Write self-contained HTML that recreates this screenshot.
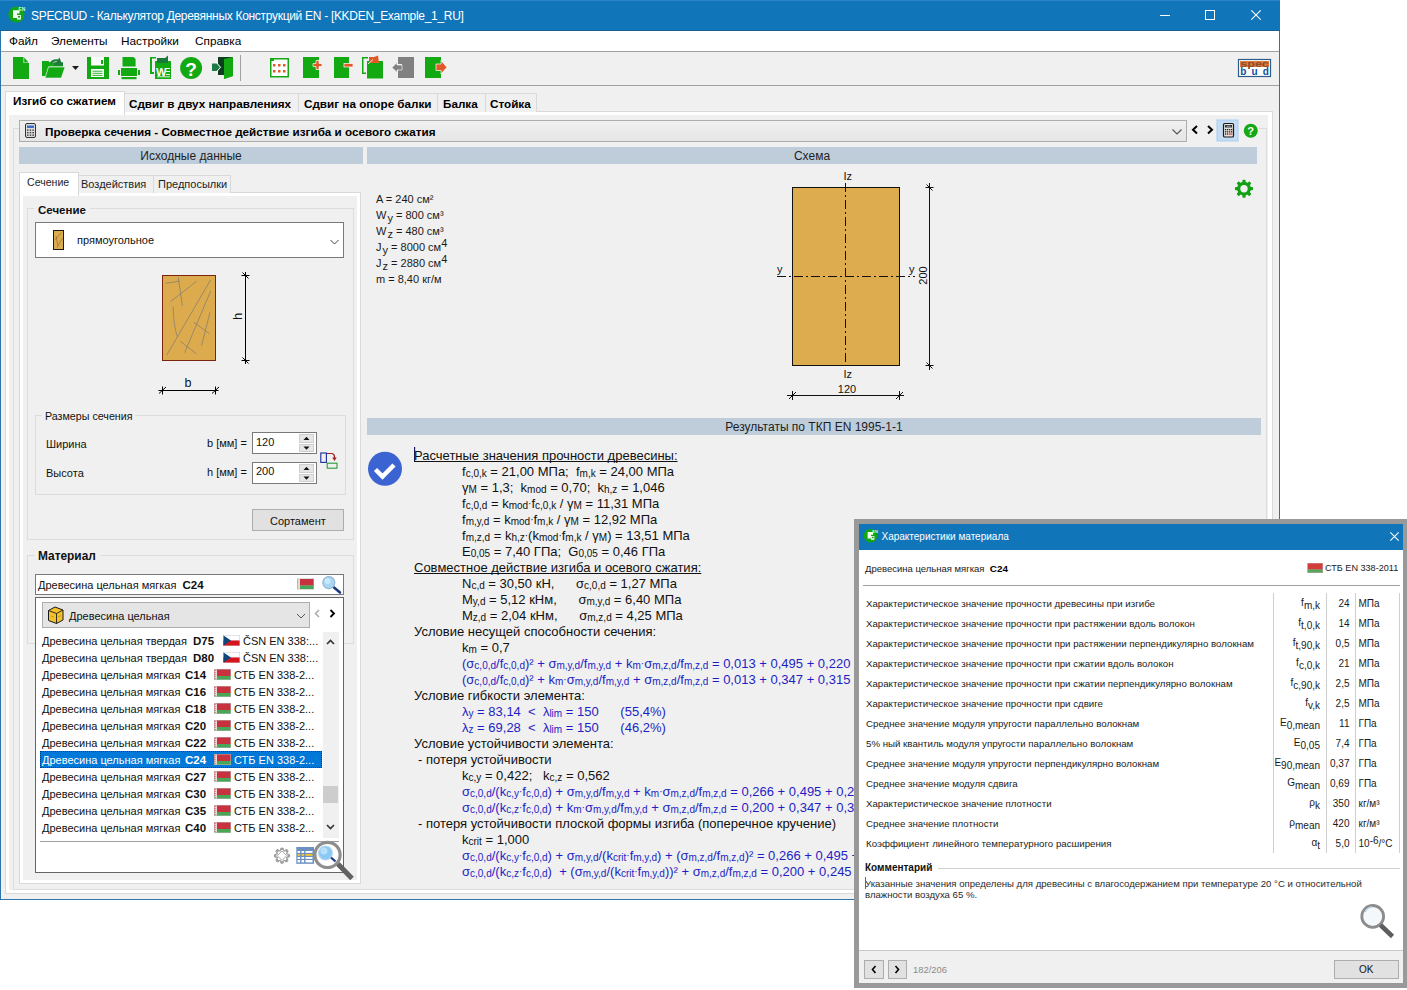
<!DOCTYPE html>
<html><head><meta charset="utf-8">
<style>
*{box-sizing:border-box;margin:0;padding:0}
html,body{width:1407px;height:990px;overflow:hidden;background:#fff;font-family:"Liberation Sans",sans-serif;font-size:11px;color:#000}
.a{position:absolute}
.t{position:absolute;white-space:nowrap;line-height:1}
.hdr{position:absolute;background:#bfcddb;height:17px;color:#1e1e1e;font-size:12px;text-align:center;line-height:19px}
.b{font-weight:bold}
svg{position:absolute;overflow:visible}
.r sub{font-size:10px;vertical-align:-1px;line-height:0}
.r sup{font-size:9px;vertical-align:4px;line-height:0}
.bl{color:#1a1ab4}
.dt{font-size:10px;position:relative;top:-1.5px}
.ul{text-decoration:underline;text-decoration-skip-ink:none}
.row{position:absolute;left:0;height:17px;width:282px;line-height:17px;white-space:nowrap}
.dr{position:absolute;left:0;width:540px;height:20px;line-height:20px;white-space:nowrap;font-size:9.65px;color:#1a1a1a}
.dr sub{font-size:9px;vertical-align:-2px;line-height:0}
</style></head><body>
<!-- ===== main window ===== -->
<div class="a" style="left:0;top:0;width:1280px;height:900px;background:#f0f0f0;border:1px solid #2c74ad;border-top:none"></div>
<div class="a" style="left:0;top:0;width:1280px;height:31px;background:#1175ba;border-bottom:1px solid #1a5f90;border-top:1px solid #2a86c8"></div>
<svg style="left:4px;top:2px" width="26" height="26" viewBox="0 0 26 26"><circle cx="12.4" cy="12.6" r="8" fill="#12a612"/><path d="M9 8.2 H15.5 V11.5 H13 V16 H9 Z" fill="#f4fff4"/><rect x="13" y="13" width="4" height="4.6" fill="#d8f8d8"/><rect x="14" y="14" width="2" height="1.5" fill="#3a8a3a"/><text x="14.5" y="9.2" font-size="4.8" font-weight="bold" fill="#c8ffc8" font-family="Liberation Sans">EN</text></svg>
<div class="t" style="left:31px;top:10px;font-size:12px;letter-spacing:-0.3px;color:#fff">SPECBUD - Калькулятор Деревянных Конструкций EN - [KKDEN_Example_1_RU]</div>
<!-- window buttons -->
<div class="a" style="left:1160px;top:15px;width:10px;height:1px;background:#fff"></div>
<div class="a" style="left:1205px;top:10px;width:10px;height:10px;border:1px solid #fff"></div>
<svg style="left:1251px;top:10px" width="10" height="10" viewBox="0 0 10 10"><path d="M0.3 0.3 L9.7 9.7 M9.7 0.3 L0.3 9.7" stroke="#fff" stroke-width="1.1"/></svg>
<!-- menu -->
<div class="a" style="left:1px;top:31px;width:1278px;height:20px;background:#fff"></div>
<div class="a" style="left:1px;top:51px;width:1278px;height:1px;background:#a0a0a0"></div>
<div class="t" style="left:9px;top:36px;font-size:11.8px">Файл</div>
<div class="t" style="left:51px;top:36px;font-size:11.8px">Элементы</div>
<div class="t" style="left:121px;top:36px;font-size:11.8px">Настройки</div>
<div class="t" style="left:195px;top:36px;font-size:11.8px">Справка</div>
<!-- toolbar -->
<div class="a" style="left:1px;top:85px;width:1278px;height:1px;background:#a0a0a0"></div>
<svg style="left:0;top:0" width="1407" height="990" viewBox="0 0 1407 990">
<g fill="#12a912">
 <!-- new -->
 <path d="M13 57 H23.5 V63 H29 V79 H13 Z"/>
 <path d="M24.2 57.6 L28.6 62.4 H24.2 Z"/>
 <!-- open -->
 <path d="M42 61 H48.5 L50 62.5 H63 V66.5 H48.5 L45.5 76 H42 Z"/>
 <path d="M50 62.5 Q53 58.5 58 59.5 L59.5 57.5 L61.5 63 L56 63 L57 61.3 Q54 61 51.5 63.5 Z" fill="#1a7a3a"/>
 <rect x="54" y="62.5" width="9" height="3" fill="#1a7a3a"/>
 <path d="M48.5 67 H65 L61.3 78 H45 Z" stroke="#f0f0f0" stroke-width="0.6"/>
 <!-- save -->
 <path d="M87 57 H109 V79 H87 Z"/>
</g>
<path d="M72 66 H79 L75.5 70 Z" fill="#1e1e1e"/>
<rect x="91" y="57" width="13" height="8.5" fill="#fff"/>
<rect x="101" y="60" width="2" height="4" fill="#12a912"/>
<rect x="91" y="69" width="13" height="8" fill="#fff"/>
<path d="M92.5 71.2 H102.5 M92.5 73.3 H102.5 M92.5 75.4 H102.5" stroke="#12a912" stroke-width="0.9"/>
<g fill="#12a912">
 <!-- print -->
 <path d="M122.5 57 H133.5 L135.6 59 V66.5 H122.5 Z"/>
 <rect x="121" y="68" width="16" height="8"/>
 <rect x="118" y="70" width="2" height="5"/>
 <rect x="138" y="70" width="2" height="5"/>
 <rect x="121.5" y="77" width="15" height="2.2"/>
 <!-- word -->
 <path d="M150 57 H156 V58.5 H152 V72 H154 V74 H150 Z"/>
 <rect x="155" y="61" width="16" height="18"/>
 <!-- help -->
 <circle cx="191.1" cy="68" r="11"/>
 <!-- exit door -->
 <path d="M224 59 L233 57 V76 L224 79 Z"/>
</g>
<path d="M157 58 H165 L168 55.5 V63 H157 Z" fill="#1a7a3a"/>
<text x="156" y="76.3" font-family="Liberation Sans" font-weight="bold" font-size="11" fill="#fff" textLength="10.5" lengthAdjust="spacingAndGlyphs">W</text>
<path d="M166 68.5 H170 M166 71.5 H170 M166 74.5 H170 M157 76.8 H170" stroke="#fff" stroke-width="0.9"/>
<text x="191.1" y="75.5" font-family="Liberation Sans" font-weight="bold" font-size="19" fill="#fff" text-anchor="middle">?</text>
<path d="M218 57 H233 V75 H218 Z" fill="#0d3d1f"/>
<path d="M224 59 L233 57 V76 L224 79 Z" fill="#12a912"/>
<path d="M212 63.5 H217 L221.5 67.3 L217 71 H212 Z" fill="#1d7a46"/>
<path d="M216 62 L220.5 67.3 L216 72.5" stroke="#fff" stroke-width="1" fill="none"/>
<!-- separator -->
<rect x="240" y="55" width="1" height="26" fill="#a0a0a0"/>
<!-- grid -->
<rect x="270" y="58" width="19" height="19.5" fill="#12a912"/>
<path d="M271.5 61 H274 V59.5 H287.5 V76 H271.5 Z" fill="#fff"/>
<g fill="#e05a28"><rect x="273" y="64" width="2.5" height="2.5"/><rect x="278" y="64" width="2.5" height="2.5"/><rect x="283" y="64" width="2.5" height="2.5"/><rect x="273" y="70" width="2.5" height="2.5"/><rect x="278" y="70" width="2.5" height="2.5"/><rect x="283" y="70" width="2.5" height="2.5"/></g>
<!-- add -->
<rect x="303" y="57" width="16" height="21" fill="#12a912"/>
<path d="M313 63.5 H316 V60.5 H319 V63.5 H322 V66.5 H319 V69.5 H316 V66.5 H313 Z" fill="#e05a28" stroke="#fff" stroke-width="0.7"/>
<!-- remove -->
<rect x="334" y="57" width="15" height="21" fill="#12a912"/>
<rect x="344" y="63.5" width="9" height="3.5" fill="#e05a28" stroke="#fff" stroke-width="0.7"/>
<!-- copy -->
<path d="M362 57 H368 V58.5 H363.5 V72.5 H366 V74 H362 Z" fill="#12a912"/>
<rect x="367" y="61" width="16" height="17.5" fill="#12a912"/>
<path d="M369 57 H374 L378 55.5 L379 63 H369 Z" fill="#e05a28"/>
<path d="M368 64 L373 59.5" stroke="#fff" stroke-width="0.8"/>
<!-- gray -->
<path d="M398 57 H414 V78 H398 V70 H402 V64 H398 Z" fill="#808080"/>
<path d="M392 67.5 L397 62.5 V65 H402 V70 H397 V72.5 Z" fill="#808080" stroke="#fff" stroke-width="0.6"/>
<!-- export -->
<rect x="425" y="57" width="16" height="21" fill="#12a912"/>
<path d="M436 64 H441 V60.5 L447 67.3 L441 74 V70.5 H436 Z" fill="#e05a28" stroke="#fff" stroke-width="0.7"/>
<!-- logo -->
<rect x="1238.5" y="59.5" width="32" height="17" fill="#fff" stroke="#2e5b8e" stroke-width="1.2"/>
<rect x="1240" y="61" width="29" height="6" fill="#e07a3a"/>
<text x="1240.3" y="67.2" font-family="Liberation Sans" font-weight="bold" font-size="9" fill="#8a4a2a" textLength="28.5" lengthAdjust="spacingAndGlyphs">spec</text>
<text x="1240.3" y="74.8" font-family="Liberation Sans" font-weight="bold" font-size="10" fill="#0b4e9e" textLength="28.5" lengthAdjust="spacing">bud</text>
</svg>
<!-- ===== main tabs ===== -->
<div class="a" style="left:5px;top:111px;width:1268px;height:783px;border:1px solid #d9d9d9;background:#fff"></div>
<div class="a" style="left:9px;top:115px;width:1259px;height:775px;background:#f0f0f0"></div>
<!-- inactive tabs -->
<div class="a" style="left:124px;top:93px;width:175px;height:19px;background:#f0f0f0;border:1px solid #d9d9d9;border-bottom:none"></div>
<div class="a" style="left:298px;top:93px;width:140px;height:19px;background:#f0f0f0;border:1px solid #d9d9d9;border-bottom:none"></div>
<div class="a" style="left:437px;top:93px;width:49px;height:19px;background:#f0f0f0;border:1px solid #d9d9d9;border-bottom:none"></div>
<div class="a" style="left:485px;top:93px;width:52px;height:19px;background:#f0f0f0;border:1px solid #d9d9d9;border-bottom:none"></div>
<div class="a" style="left:5px;top:91px;width:120px;height:24px;background:#fff;border:1px solid #d9d9d9;border-bottom:none"></div>
<div class="t b" style="left:13px;top:95px;font-size:11.7px">Изгиб со сжатием</div>
<div class="t b" style="left:129px;top:98px;font-size:11.7px">Сдвиг в двух направлениях</div>
<div class="t b" style="left:304px;top:98px;font-size:11.7px">Сдвиг на опоре балки</div>
<div class="t b" style="left:443px;top:98px;font-size:11.7px">Балка</div>
<div class="t b" style="left:490px;top:98px;font-size:11.7px">Стойка</div>
<!-- group frame -->
<div class="a" style="left:13px;top:128px;width:1254px;height:762px;border:1px solid #dcdcdc;border-top:none"></div>
<div class="a" style="left:13px;top:128px;width:6px;height:1px;background:#dcdcdc"></div>
<div class="a" style="left:1259px;top:128px;width:8px;height:1px;background:#dcdcdc"></div>
<!-- header combo -->
<div class="a" style="left:19px;top:120px;width:1168px;height:22px;border:1px solid #adadad;background:linear-gradient(#f0f0f0,#e5e5e5)"></div>
<svg style="left:0;top:0" width="1407" height="990" viewBox="0 0 1407 990">
 <rect x="25.5" y="123.5" width="10" height="14" rx="1.5" fill="#ddd" stroke="#333" stroke-width="1"/>
 <rect x="27" y="125.5" width="7" height="2.5" fill="#3a6fd0"/>
 <g fill="#333"><rect x="27" y="129.5" width="1.5" height="1.3"/><rect x="29.7" y="129.5" width="1.5" height="1.3"/><rect x="32.4" y="129.5" width="1.5" height="1.3"/><rect x="27" y="132" width="1.5" height="1.3"/><rect x="29.7" y="132" width="1.5" height="1.3"/><rect x="32.4" y="132" width="1.5" height="1.3"/><rect x="27" y="134.5" width="1.5" height="1.3"/><rect x="29.7" y="134.5" width="1.5" height="1.3"/><rect x="32.4" y="134.5" width="1.5" height="1.3"/></g>
 <path d="M1172.5 129.5 L1177 134 L1181.5 129.5" stroke="#555" stroke-width="1.1" fill="none"/>
 <path d="M1197 126 L1193 129.7 L1197 133.4" stroke="#000" stroke-width="2" fill="none"/>
 <path d="M1208 126 L1212 129.7 L1208 133.4" stroke="#000" stroke-width="2" fill="none"/>
 <rect x="1217" y="120" width="21" height="21" fill="#c4ddf5" stroke="#a9cdef" stroke-width="1"/>
 <rect x="1223.5" y="123.5" width="10" height="13.5" rx="1.3" fill="#e6e0da" stroke="#1a1a1a" stroke-width="1.2"/>
 <rect x="1225" y="125" width="7" height="2.5" fill="#333"/>
 <rect x="1226.5" y="125.7" width="4" height="1" fill="#8ac"/>
 <g fill="#222"><rect x="1225" y="129" width="1.3" height="1.3"/><rect x="1227" y="129" width="1.3" height="1.3"/><rect x="1229" y="129" width="1.3" height="1.3"/><rect x="1231" y="129" width="1.3" height="1.3"/><rect x="1225" y="131.2" width="1.3" height="1.3"/><rect x="1227" y="131.2" width="1.3" height="1.3"/><rect x="1229" y="131.2" width="1.3" height="1.3"/><rect x="1231" y="131.2" width="1.3" height="1.3"/><rect x="1225" y="133.4" width="1.3" height="1.3"/><rect x="1227" y="133.4" width="1.3" height="1.3"/></g>
 <rect x="1229" y="133.4" width="3.3" height="1.3" fill="#e04040"/>
 <circle cx="1250.8" cy="130.8" r="7" fill="#12a912"/>
 <text x="1247.3" y="135.3" font-family="Liberation Sans" font-weight="bold" font-size="11" fill="#fff">?</text>
</svg>
<div class="t b" style="left:45px;top:126px;font-size:11.7px">Проверка сечения - Совместное действие изгиба и осевого сжатия</div>
<!-- section headers -->
<div class="hdr" style="left:19px;top:147px;width:344px">Исходные данные</div>
<div class="hdr" style="left:367px;top:147px;width:890px">Схема</div>
<!-- ===== left panel ===== -->
<div class="a" style="left:19px;top:192px;width:342px;height:692px;border:1px solid #d9d9d9;background:#fff"></div>
<div class="a" style="left:23px;top:196px;width:334px;height:684px;background:#f0f0f0"></div>
<div class="a" style="left:78px;top:175px;width:76px;height:18px;background:#f0f0f0;border:1px solid #d9d9d9;border-bottom:none"></div>
<div class="a" style="left:153px;top:175px;width:78px;height:18px;background:#f0f0f0;border:1px solid #d9d9d9;border-bottom:none"></div>
<div class="a" style="left:19px;top:172px;width:60px;height:24px;background:#fff;border:1px solid #d9d9d9;border-bottom:none"></div>
<div class="t" style="left:27px;top:177px;font-size:10.6px;color:#1e1e1e">Сечение</div>
<div class="t" style="left:81px;top:179px;font-size:11px;color:#1e1e1e">Воздействия</div>
<div class="t" style="left:158px;top:179px;font-size:11px;color:#1e1e1e">Предпосылки</div>
<!-- group Сечение -->
<div class="a" style="left:27px;top:208px;width:327px;height:332px;border:1px solid #dcdcdc"></div>
<div class="a" style="left:34px;top:202px;width:56px;height:12px;background:#f0f0f0"></div>
<div class="t b" style="left:38px;top:205px;font-size:11.5px;color:#111">Сечение</div>
<div class="a" style="left:35px;top:222px;width:309px;height:36px;background:#fff;border:1px solid #7a7a7a"></div>
<div class="t" style="left:77px;top:235px;font-size:11px;color:#111">прямоугольное</div>
<svg style="left:0;top:0" width="1407" height="990" viewBox="0 0 1407 990">
 <rect x="53.5" y="230.5" width="10" height="19" fill="#dcab4e" stroke="#1a1a1a" stroke-width="1"/>
 <path d="M55 240 L61.5 232.5 M56 236 L58 246 M57 247.5 L62.5 238" stroke="#8a6a30" stroke-width="0.6" fill="none"/>
 <path d="M330.5 240 L334.5 244 L338.5 240" stroke="#444" stroke-width="1" fill="none"/>
 <!-- section pic -->
 <rect x="162.5" y="275.5" width="53" height="85" fill="#dcab4e" stroke="#7a2410" stroke-width="1"/>
 <g stroke="#7f7a70" stroke-width="0.7" fill="none">
  <path d="M165.2 283.3 L179.6 281.2"/><path d="M178.2 277 L182.4 306"/><path d="M170.4 301.7 L196.6 281.2"/>
  <path d="M166.9 354.8 L210.7 279.8"/><path d="M173.2 306.7 Q173.3 325 177.5 337"/><path d="M184.6 352.6 L210.7 291"/>
  <path d="M180.3 341.3 L196.6 354"/><path d="M193.7 322.2 L209.3 333.5"/><path d="M201.5 345.6 L210 312.3"/>
 </g>
 <g stroke="#000" stroke-width="1" fill="none">
  <path d="M245.5 272 V364"/><path d="M241.5 275.5 H249.5 M242.5 272.5 L248.5 278.5"/><path d="M241.5 360.5 H249.5 M242.5 357.5 L248.5 363.5"/>
  <path d="M158.5 390.5 H218.5"/><path d="M162.5 386.5 V394.5 M159 393.5 L166 387"/><path d="M215.5 386.5 V394.5 M212 393.5 L219 387"/>
 </g>
 <text x="0" y="0" transform="translate(242,316.5) rotate(-90)" font-family="Liberation Sans" font-size="13" fill="#111" text-anchor="middle">h</text>
 <text x="188" y="386.6" font-family="Liberation Sans" font-size="12.5" fill="#111" text-anchor="middle">b</text>
</svg>
<!-- group Размеры сечения -->
<div class="a" style="left:35px;top:415px;width:311px;height:80px;border:1px solid #dcdcdc"></div>
<div class="a" style="left:42px;top:409px;width:93px;height:12px;background:#f0f0f0"></div>
<div class="t" style="left:45px;top:411px;font-size:10.7px;color:#111">Размеры сечения</div>
<div class="t" style="left:46px;top:439px;font-size:11px;color:#111">Ширина</div>
<div class="t" style="left:46px;top:468px;font-size:11px;color:#111">Высота</div>
<div class="t" style="left:207px;top:438px;font-size:11px;color:#111">b [мм] =</div>
<div class="t" style="left:207px;top:467px;font-size:11px;color:#111">h [мм] =</div>
<div class="a" style="left:252px;top:432px;width:65px;height:22px;background:#fff;border:1px solid #7a7a7a"></div>
<div class="a" style="left:252px;top:462px;width:65px;height:22px;background:#fff;border:1px solid #7a7a7a"></div>
<div class="t" style="left:256px;top:437px;font-size:11px;color:#111">120</div>
<div class="t" style="left:256px;top:466px;font-size:11px;color:#111">200</div>
<svg style="left:0;top:0" width="1407" height="990" viewBox="0 0 1407 990">
 <g fill="#e6e6e6" stroke="#cfcfcf" stroke-width="1">
  <rect x="299.5" y="434.5" width="14" height="8"/><rect x="299.5" y="444.5" width="14" height="7"/>
  <rect x="299.5" y="464.5" width="14" height="8"/><rect x="299.5" y="474.5" width="14" height="7"/>
 </g>
 <g fill="#111"><path d="M303.5 440 H309.5 L306.5 436.8 Z"/><path d="M303.5 446.5 H309.5 L306.5 449.7 Z"/>
 <path d="M303.5 470 H309.5 L306.5 466.8 Z"/><path d="M303.5 476.5 H309.5 L306.5 479.7 Z"/></g>
 <rect x="320.8" y="453" width="5.6" height="9.4" fill="none" stroke="#1a2a9a" stroke-width="1.1"/>
 <rect x="327.2" y="463.2" width="9.8" height="5" fill="none" stroke="#2a9a3a" stroke-width="1.1"/>
 <path d="M327 453.5 H332 Q334.5 454 334.5 457 V459" stroke="#a02020" stroke-width="1.2" fill="none"/>
 <path d="M332.3 457.5 L334.5 461 L336.7 457.5 Z" fill="#a02020"/>
</svg>
<!-- Сортамент -->
<div class="a" style="left:252px;top:509px;width:92px;height:22px;background:#e1e1e1;border:1px solid #adadad"></div>
<div class="t" style="left:270px;top:516px;font-size:11px;color:#111">Сортамент</div>
<!-- group Материал -->
<div class="a" style="left:27px;top:555px;width:327px;height:89px;border:1px solid #dcdcdc"></div>
<div class="a" style="left:34px;top:549px;width:66px;height:12px;background:#f0f0f0"></div>
<div class="t b" style="left:38px;top:551px;font-size:11.9px;color:#111">Материал</div>
<div class="a" style="left:35px;top:574px;width:309px;height:21px;background:#fff;border:1px solid #7a7a7a"></div>
<div class="t" style="left:38px;top:580px;font-size:11px;color:#111">Древесина цельная мягкая&nbsp; <b style="font-size:11.5px">C24</b></div>
<!-- listbox -->
<div class="a" style="left:35px;top:597px;width:309px;height:276px;background:#fff;border:1px solid #646464"></div>
<div class="a" style="left:42px;top:602px;width:268px;height:26px;background:#e5e5e5;border:1px solid #adadad"></div>
<div class="t" style="left:69px;top:611px;font-size:11px;color:#111">Древесина цельная</div>
<div class="a" style="left:323px;top:632px;width:16px;height:206px;background:#f0f0f0"></div>
<div class="a" style="left:323px;top:786px;width:15px;height:17px;background:#cdcdcd"></div>
<div class="a" style="left:40px;top:841px;width:299px;height:1px;background:#a0a0a0"></div>
<div class="t" style="left:42px;top:636px;font-size:11px;color:#111">Древесина цельная твердая</div>
<div class="t b" style="left:193px;top:636px;font-size:11.5px;color:#111">D75</div>
<div class="t" style="left:243px;top:636px;font-size:11px;color:#111">ČSN EN 338:...</div>
<svg style="left:223px;top:635px" width="17" height="11" viewBox="0 0 17 11"><rect width="17" height="11" fill="#c8c8d0"/><rect x="0.5" y="0.5" width="16" height="5" fill="#fff"/><rect x="0.5" y="5.5" width="16" height="5" fill="#d7141a"/><path d="M0.5 0.5 L8 5.5 L0.5 10.5 Z" fill="#11457e"/></svg>
<div class="t" style="left:42px;top:653px;font-size:11px;color:#111">Древесина цельная твердая</div>
<div class="t b" style="left:193px;top:653px;font-size:11.5px;color:#111">D80</div>
<div class="t" style="left:243px;top:653px;font-size:11px;color:#111">ČSN EN 338:...</div>
<svg style="left:223px;top:652px" width="17" height="11" viewBox="0 0 17 11"><rect width="17" height="11" fill="#c8c8d0"/><rect x="0.5" y="0.5" width="16" height="5" fill="#fff"/><rect x="0.5" y="5.5" width="16" height="5" fill="#d7141a"/><path d="M0.5 0.5 L8 5.5 L0.5 10.5 Z" fill="#11457e"/></svg>
<div class="t" style="left:42px;top:670px;font-size:11px;color:#111">Древесина цельная мягкая</div>
<div class="t b" style="left:185px;top:670px;font-size:11.5px;color:#111">C14</div>
<div class="t" style="left:234px;top:670px;font-size:11px;color:#111">СТБ EN 338-2...</div>
<svg style="left:214px;top:669px" width="17" height="11" viewBox="0 0 17 11"><rect width="17" height="11" fill="#b8b8b8"/><rect x="0.5" y="0.5" width="16" height="6.5" fill="#c8313e"/><rect x="0.5" y="7" width="16" height="3.5" fill="#4aa657"/><rect x="0.5" y="0.5" width="2.5" height="10" fill="#e8d8d8"/><path d="M1 1 V10" stroke="#c8313e" stroke-width="0.8" stroke-dasharray="1 1"/></svg>
<div class="t" style="left:42px;top:687px;font-size:11px;color:#111">Древесина цельная мягкая</div>
<div class="t b" style="left:185px;top:687px;font-size:11.5px;color:#111">C16</div>
<div class="t" style="left:234px;top:687px;font-size:11px;color:#111">СТБ EN 338-2...</div>
<svg style="left:214px;top:686px" width="17" height="11" viewBox="0 0 17 11"><rect width="17" height="11" fill="#b8b8b8"/><rect x="0.5" y="0.5" width="16" height="6.5" fill="#c8313e"/><rect x="0.5" y="7" width="16" height="3.5" fill="#4aa657"/><rect x="0.5" y="0.5" width="2.5" height="10" fill="#e8d8d8"/><path d="M1 1 V10" stroke="#c8313e" stroke-width="0.8" stroke-dasharray="1 1"/></svg>
<div class="t" style="left:42px;top:704px;font-size:11px;color:#111">Древесина цельная мягкая</div>
<div class="t b" style="left:185px;top:704px;font-size:11.5px;color:#111">C18</div>
<div class="t" style="left:234px;top:704px;font-size:11px;color:#111">СТБ EN 338-2...</div>
<svg style="left:214px;top:703px" width="17" height="11" viewBox="0 0 17 11"><rect width="17" height="11" fill="#b8b8b8"/><rect x="0.5" y="0.5" width="16" height="6.5" fill="#c8313e"/><rect x="0.5" y="7" width="16" height="3.5" fill="#4aa657"/><rect x="0.5" y="0.5" width="2.5" height="10" fill="#e8d8d8"/><path d="M1 1 V10" stroke="#c8313e" stroke-width="0.8" stroke-dasharray="1 1"/></svg>
<div class="t" style="left:42px;top:721px;font-size:11px;color:#111">Древесина цельная мягкая</div>
<div class="t b" style="left:185px;top:721px;font-size:11.5px;color:#111">C20</div>
<div class="t" style="left:234px;top:721px;font-size:11px;color:#111">СТБ EN 338-2...</div>
<svg style="left:214px;top:720px" width="17" height="11" viewBox="0 0 17 11"><rect width="17" height="11" fill="#b8b8b8"/><rect x="0.5" y="0.5" width="16" height="6.5" fill="#c8313e"/><rect x="0.5" y="7" width="16" height="3.5" fill="#4aa657"/><rect x="0.5" y="0.5" width="2.5" height="10" fill="#e8d8d8"/><path d="M1 1 V10" stroke="#c8313e" stroke-width="0.8" stroke-dasharray="1 1"/></svg>
<div class="t" style="left:42px;top:738px;font-size:11px;color:#111">Древесина цельная мягкая</div>
<div class="t b" style="left:185px;top:738px;font-size:11.5px;color:#111">C22</div>
<div class="t" style="left:234px;top:738px;font-size:11px;color:#111">СТБ EN 338-2...</div>
<svg style="left:214px;top:737px" width="17" height="11" viewBox="0 0 17 11"><rect width="17" height="11" fill="#b8b8b8"/><rect x="0.5" y="0.5" width="16" height="6.5" fill="#c8313e"/><rect x="0.5" y="7" width="16" height="3.5" fill="#4aa657"/><rect x="0.5" y="0.5" width="2.5" height="10" fill="#e8d8d8"/><path d="M1 1 V10" stroke="#c8313e" stroke-width="0.8" stroke-dasharray="1 1"/></svg>
<div class="a" style="left:40px;top:750.5px;width:282px;height:17px;background:#0078d7;border:1px dotted #003a80"></div>
<div class="t" style="left:42px;top:755px;font-size:11px;color:#fff">Древесина цельная мягкая</div>
<div class="t b" style="left:185px;top:755px;font-size:11.5px;color:#fff">C24</div>
<div class="t" style="left:234px;top:755px;font-size:11px;color:#fff">СТБ EN 338-2...</div>
<svg style="left:214px;top:754px" width="17" height="11" viewBox="0 0 17 11"><rect width="17" height="11" fill="#b8b8b8"/><rect x="0.5" y="0.5" width="16" height="6.5" fill="#c8313e"/><rect x="0.5" y="7" width="16" height="3.5" fill="#4aa657"/><rect x="0.5" y="0.5" width="2.5" height="10" fill="#e8d8d8"/><path d="M1 1 V10" stroke="#c8313e" stroke-width="0.8" stroke-dasharray="1 1"/></svg>
<div class="t" style="left:42px;top:772px;font-size:11px;color:#111">Древесина цельная мягкая</div>
<div class="t b" style="left:185px;top:772px;font-size:11.5px;color:#111">C27</div>
<div class="t" style="left:234px;top:772px;font-size:11px;color:#111">СТБ EN 338-2...</div>
<svg style="left:214px;top:771px" width="17" height="11" viewBox="0 0 17 11"><rect width="17" height="11" fill="#b8b8b8"/><rect x="0.5" y="0.5" width="16" height="6.5" fill="#c8313e"/><rect x="0.5" y="7" width="16" height="3.5" fill="#4aa657"/><rect x="0.5" y="0.5" width="2.5" height="10" fill="#e8d8d8"/><path d="M1 1 V10" stroke="#c8313e" stroke-width="0.8" stroke-dasharray="1 1"/></svg>
<div class="t" style="left:42px;top:789px;font-size:11px;color:#111">Древесина цельная мягкая</div>
<div class="t b" style="left:185px;top:789px;font-size:11.5px;color:#111">C30</div>
<div class="t" style="left:234px;top:789px;font-size:11px;color:#111">СТБ EN 338-2...</div>
<svg style="left:214px;top:788px" width="17" height="11" viewBox="0 0 17 11"><rect width="17" height="11" fill="#b8b8b8"/><rect x="0.5" y="0.5" width="16" height="6.5" fill="#c8313e"/><rect x="0.5" y="7" width="16" height="3.5" fill="#4aa657"/><rect x="0.5" y="0.5" width="2.5" height="10" fill="#e8d8d8"/><path d="M1 1 V10" stroke="#c8313e" stroke-width="0.8" stroke-dasharray="1 1"/></svg>
<div class="t" style="left:42px;top:806px;font-size:11px;color:#111">Древесина цельная мягкая</div>
<div class="t b" style="left:185px;top:806px;font-size:11.5px;color:#111">C35</div>
<div class="t" style="left:234px;top:806px;font-size:11px;color:#111">СТБ EN 338-2...</div>
<svg style="left:214px;top:805px" width="17" height="11" viewBox="0 0 17 11"><rect width="17" height="11" fill="#b8b8b8"/><rect x="0.5" y="0.5" width="16" height="6.5" fill="#c8313e"/><rect x="0.5" y="7" width="16" height="3.5" fill="#4aa657"/><rect x="0.5" y="0.5" width="2.5" height="10" fill="#e8d8d8"/><path d="M1 1 V10" stroke="#c8313e" stroke-width="0.8" stroke-dasharray="1 1"/></svg>
<div class="t" style="left:42px;top:823px;font-size:11px;color:#111">Древесина цельная мягкая</div>
<div class="t b" style="left:185px;top:823px;font-size:11.5px;color:#111">C40</div>
<div class="t" style="left:234px;top:823px;font-size:11px;color:#111">СТБ EN 338-2...</div>
<svg style="left:214px;top:822px" width="17" height="11" viewBox="0 0 17 11"><rect width="17" height="11" fill="#b8b8b8"/><rect x="0.5" y="0.5" width="16" height="6.5" fill="#c8313e"/><rect x="0.5" y="7" width="16" height="3.5" fill="#4aa657"/><rect x="0.5" y="0.5" width="2.5" height="10" fill="#e8d8d8"/><path d="M1 1 V10" stroke="#c8313e" stroke-width="0.8" stroke-dasharray="1 1"/></svg>
<svg style="left:0;top:0" width="1407" height="990" viewBox="0 0 1407 990">
 <path d="M327 644 L330.5 640.5 L334 644" stroke="#333" stroke-width="1.6" fill="none"/>
 <path d="M327 825 L330.5 828.5 L334 825" stroke="#333" stroke-width="1.6" fill="none"/>
 <path d="M297 614 L301 618 L305 614" stroke="#555" stroke-width="1" fill="none"/>
 <path d="M319 610 L315.5 613.5 L319 617" stroke="#aaa" stroke-width="1.5" fill="none"/>
 <path d="M330.5 610 L334 613.5 L330.5 617" stroke="#000" stroke-width="1.8" fill="none"/>
 <!-- box icon -->
 <path d="M48.5 610.5 L55 607 L63 610 V620 L56.5 623.5 L48.5 620.5 Z" fill="#f2c12e" stroke="#1a1a1a" stroke-width="1"/>
 <path d="M48.5 610.5 L56.5 613.5 L63 610 M56.5 613.5 V623.5" stroke="#1a1a1a" stroke-width="0.9" fill="none"/>
 <path d="M51 616 L54 617 M58 617 L61 615.5" stroke="#c08a10" stroke-width="0.7"/>
 <!-- flag in input -->
 <rect x="297" y="578.5" width="17" height="11" fill="#b8b8b8"/>
 <rect x="297.5" y="579" width="16" height="6.5" fill="#c8313e"/><rect x="297.5" y="585.5" width="16" height="3.5" fill="#4aa657"/><rect x="297.5" y="579" width="2.5" height="10" fill="#e8d8d8"/>
 <!-- small magnifier in input -->
 <path d="M334 587.5 L340 592.5" stroke="#1a3a80" stroke-width="2.6" stroke-linecap="round"/>
 <circle cx="328.8" cy="582.6" r="6" fill="#a8d6f6" stroke="#98b4cc" stroke-width="1.2"/>
 <circle cx="327.5" cy="581" r="3" fill="#c8e8fc"/>
 <!-- bottom icons -->
 <g transform="translate(282,855.7)"><g fill="#a0a0a0"><rect x="-2" y="-8.2" width="4" height="5" rx="1.8" transform="rotate(0)"/><rect x="-2" y="-8.2" width="4" height="5" rx="1.8" transform="rotate(45)"/><rect x="-2" y="-8.2" width="4" height="5" rx="1.8" transform="rotate(90)"/><rect x="-2" y="-8.2" width="4" height="5" rx="1.8" transform="rotate(135)"/><rect x="-2" y="-8.2" width="4" height="5" rx="1.8" transform="rotate(180)"/><rect x="-2" y="-8.2" width="4" height="5" rx="1.8" transform="rotate(225)"/><rect x="-2" y="-8.2" width="4" height="5" rx="1.8" transform="rotate(270)"/><rect x="-2" y="-8.2" width="4" height="5" rx="1.8" transform="rotate(315)"/><circle r="6"/></g><g fill="#fff" transform="scale(0.68)"><rect x="-2" y="-8.2" width="4" height="5" rx="1.8" transform="rotate(0)"/><rect x="-2" y="-8.2" width="4" height="5" rx="1.8" transform="rotate(45)"/><rect x="-2" y="-8.2" width="4" height="5" rx="1.8" transform="rotate(90)"/><rect x="-2" y="-8.2" width="4" height="5" rx="1.8" transform="rotate(135)"/><rect x="-2" y="-8.2" width="4" height="5" rx="1.8" transform="rotate(180)"/><rect x="-2" y="-8.2" width="4" height="5" rx="1.8" transform="rotate(225)"/><rect x="-2" y="-8.2" width="4" height="5" rx="1.8" transform="rotate(270)"/><rect x="-2" y="-8.2" width="4" height="5" rx="1.8" transform="rotate(315)"/><circle r="6"/></g><g transform="rotate(45)"><rect x="-3.3" y="-3.3" width="6.6" height="6.6" fill="none" stroke="#a8a8a8" stroke-width="0.9"/></g></g>
 <rect x="296.3" y="847" width="17.7" height="16.8" fill="#6a8fc0"/>
 <g fill="#fff"><rect x="297.5" y="851" width="2.6" height="1.9"/><rect x="301.5" y="851" width="2.6" height="1.9"/><rect x="305.5" y="851" width="7" height="1.9"/>
 <rect x="297.5" y="857" width="2.6" height="1.9"/><rect x="301.5" y="857" width="2.6" height="1.9"/><rect x="305.5" y="857" width="7" height="1.9"/>
 <rect x="297.5" y="860" width="2.6" height="2.4"/><rect x="301.5" y="860" width="2.6" height="2.4"/><rect x="305.5" y="860" width="7" height="2.4"/></g>
 <g fill="#f2c230"><rect x="297.5" y="854" width="2.6" height="1.9"/><rect x="301.5" y="854" width="2.6" height="1.9"/><rect x="305.5" y="854" width="7" height="1.9"/></g>
 <circle cx="327.5" cy="854.9" r="12.6" fill="#fff" stroke="#8e8e8e" stroke-width="3.2"/>
 <circle cx="325.5" cy="853" r="7" fill="#8cc8f4" stroke="#b8d8ee" stroke-width="1.2"/>
 <circle cx="324" cy="851" r="3.5" fill="#b8e0fa"/>
 <path d="M331 857.5 L335.5 861.5" stroke="#1a3a8a" stroke-width="2.2"/>
 <path d="M338 864 L352 878.5" stroke="#626262" stroke-width="5"/>
</svg>
<!-- ===== right panel: scheme ===== -->

<div class="t" style="left:376px;top:191px;font-size:11px;color:#1a1a1a;line-height:16px">
A = 240 см²<br>W<span style="font-size:11px;position:relative;top:3px;margin-left:1px">y</span> = 800 см³<br>W<span style="font-size:11px;position:relative;top:3px;margin-left:1px">z</span> = 480 см³<br>J<span style="font-size:11px;position:relative;top:3px;margin-left:1px">y</span> = 8000 см<span style="font-size:11px;position:relative;top:-4px">4</span><br>J<span style="font-size:11px;position:relative;top:3px;margin-left:1px">z</span> = 2880 см<span style="font-size:11px;position:relative;top:-4px">4</span><br>m = 8,40 кг/м</div>
<svg style="left:0;top:0" width="1407" height="990" viewBox="0 0 1407 990">
 <rect x="792.5" y="187.5" width="107" height="178" fill="#dcac4f" stroke="#111" stroke-width="1"/>
 <path d="M845.5 183 V365.5" stroke="#111" stroke-width="1" stroke-dasharray="9 3 2 3"/>
 <path d="M777 276.5 H915" stroke="#111" stroke-width="1" stroke-dasharray="9 3 2 3"/>
 <g stroke="#111" stroke-width="1" fill="none">
  <path d="M929.5 183 V370"/><path d="M925.5 187.5 H933.5 M926.5 184.5 L932.5 190.5"/><path d="M925.5 365.5 H933.5 M926.5 362.5 L932.5 368.5"/>
  <path d="M787 395.5 H904"/><path d="M792.5 391 V400 M789 399 L796 392"/><path d="M899.5 391 V400 M896 399 L903 392"/>
 </g>
 <g font-family="Liberation Sans" font-size="11" fill="#111">
  <text x="843.5" y="180">Iz</text><text x="843.5" y="378">Iz</text>
  <text x="777" y="273">y</text><text x="909" y="273">y</text>
  <text x="847" y="393" text-anchor="middle">120</text>
  <text transform="translate(926.5,275.5) rotate(-90)" text-anchor="middle">200</text>
 </g>
 <!-- gear -->
 <g transform="translate(1244,188.7)" fill="#14a014"><rect x="-1.6" y="-9" width="3.2" height="4" rx="0.8" transform="rotate(0)"/><rect x="-1.6" y="-9" width="3.2" height="4" rx="0.8" transform="rotate(45)"/><rect x="-1.6" y="-9" width="3.2" height="4" rx="0.8" transform="rotate(90)"/><rect x="-1.6" y="-9" width="3.2" height="4" rx="0.8" transform="rotate(135)"/><rect x="-1.6" y="-9" width="3.2" height="4" rx="0.8" transform="rotate(180)"/><rect x="-1.6" y="-9" width="3.2" height="4" rx="0.8" transform="rotate(225)"/><rect x="-1.6" y="-9" width="3.2" height="4" rx="0.8" transform="rotate(270)"/><rect x="-1.6" y="-9" width="3.2" height="4" rx="0.8" transform="rotate(315)"/></g>
 <circle cx="1244" cy="188.7" r="5.3" fill="none" stroke="#14a014" stroke-width="3.2"/>
</svg>
<!-- results header -->
<div class="hdr" style="left:367px;top:418px;width:894px">Результаты по ТКП EN 1995-1-1</div>
<svg style="left:0;top:0" width="1407" height="990" viewBox="0 0 1407 990">
 <circle cx="385" cy="468.8" r="17" fill="#3b64d2"/>
 <path d="M375.5 469.5 L382.5 476.5 L394 465" stroke="#fff" stroke-width="4.5" fill="none"/>
 <rect x="414" y="447" width="1.2" height="15" fill="#1a1a60"/>
</svg>
<!-- results text -->
<div class="t r" style="left:414px;top:449px;font-size:13px;color:#111"><span class="ul">Расчетные значения прочности древесины:</span></div>
<div class="t r" style="left:462px;top:465px;font-size:13px;color:#111">f<sub>c,0,k</sub> = 21,00 МПа;&nbsp; f<sub>m,k</sub> = 24,00 МПа</div>
<div class="t r" style="left:462px;top:481px;font-size:13px;color:#111">γ<sub>M</sub> = 1,3;&nbsp; k<sub>mod</sub> = 0,70;&nbsp; k<sub>h,z</sub> = 1,046</div>
<div class="t r" style="left:462px;top:497px;font-size:13px;color:#111">f<sub>c,0,d</sub> = k<sub>mod</sub><span class="dt">·</span>f<sub>c,0,k</sub> / γ<sub>M</sub> = 11,31 МПа</div>
<div class="t r" style="left:462px;top:513px;font-size:13px;color:#111">f<sub>m,y,d</sub> = k<sub>mod</sub><span class="dt">·</span>f<sub>m,k</sub> / γ<sub>M</sub> = 12,92 МПа</div>
<div class="t r" style="left:462px;top:529px;font-size:13px;color:#111">f<sub>m,z,d</sub> = k<sub>h,z</sub><span class="dt">·</span>(k<sub>mod</sub><span class="dt">·</span>f<sub>m,k</sub> / γ<sub>M</sub>) = 13,51 МПа</div>
<div class="t r" style="left:462px;top:545px;font-size:13px;color:#111">E<sub>0,05</sub> = 7,40 ГПа;&nbsp; G<sub>0,05</sub> = 0,46 ГПа</div>
<div class="t r" style="left:414px;top:561px;font-size:13px;color:#111"><span class="ul">Совместное действие изгиба и осевого сжатия:</span></div>
<div class="t r" style="left:462px;top:577px;font-size:13px;color:#111">N<sub>c,d</sub> = 30,50 кН,&nbsp;&nbsp;&nbsp;&nbsp;&nbsp; σ<sub>c,0,d</sub> = 1,27 МПа</div>
<div class="t r" style="left:462px;top:593px;font-size:13px;color:#111">M<sub>y,d</sub> = 5,12 кНм,&nbsp;&nbsp;&nbsp;&nbsp;&nbsp; σ<sub>m,y,d</sub> = 6,40 МПа</div>
<div class="t r" style="left:462px;top:609px;font-size:13px;color:#111">M<sub>z,d</sub> = 2,04 кНм,&nbsp;&nbsp;&nbsp;&nbsp;&nbsp; σ<sub>m,z,d</sub> = 4,25 МПа</div>
<div class="t r" style="left:414px;top:625px;font-size:13px;color:#111">Условие несущей способности сечения:</div>
<div class="t r" style="left:462px;top:641px;font-size:13px;color:#111">k<sub>m</sub> = 0,7</div>
<div class="t r" style="left:462px;top:657px;font-size:13px;color:#1e1ec4">(σ<sub>c,0,d</sub>/f<sub>c,0,d</sub>)² + σ<sub>m,y,d</sub>/f<sub>m,y,d</sub> + k<sub>m</sub><span class="dt">·</span>σ<sub>m,z,d</sub>/f<sub>m,z,d</sub> = 0,013 + 0,495 + 0,220 = 0,728 &lt; 1</div>
<div class="t r" style="left:462px;top:673px;font-size:13px;color:#1e1ec4">(σ<sub>c,0,d</sub>/f<sub>c,0,d</sub>)² + k<sub>m</sub><span class="dt">·</span>σ<sub>m,y,d</sub>/f<sub>m,y,d</sub> + σ<sub>m,z,d</sub>/f<sub>m,z,d</sub> = 0,013 + 0,347 + 0,315 = 0,675 &lt; 1</div>
<div class="t r" style="left:414px;top:689px;font-size:13px;color:#111">Условие гибкости элемента:</div>
<div class="t r" style="left:462px;top:705px;font-size:13px;color:#1e1ec4">λ<sub>y</sub> = 83,14&nbsp; &lt;&nbsp; λ<sub>lim</sub> = 150&nbsp;&nbsp;&nbsp;&nbsp;&nbsp; (55,4%)</div>
<div class="t r" style="left:462px;top:721px;font-size:13px;color:#1e1ec4">λ<sub>z</sub> = 69,28&nbsp; &lt;&nbsp; λ<sub>lim</sub> = 150&nbsp;&nbsp;&nbsp;&nbsp;&nbsp; (46,2%)</div>
<div class="t r" style="left:414px;top:737px;font-size:13px;color:#111">Условие устойчивости элемента:</div>
<div class="t r" style="left:418px;top:753px;font-size:13px;color:#111">- потеря устойчивости</div>
<div class="t r" style="left:462px;top:769px;font-size:13px;color:#111">k<sub>c,y</sub> = 0,422;&nbsp;&nbsp; k<sub>c,z</sub> = 0,562</div>
<div class="t r" style="left:462px;top:785px;font-size:13px;color:#1e1ec4">σ<sub>c,0,d</sub>/(k<sub>c,y</sub><span class="dt">·</span>f<sub>c,0,d</sub>) + σ<sub>m,y,d</sub>/f<sub>m,y,d</sub> + k<sub>m</sub><span class="dt">·</span>σ<sub>m,z,d</sub>/f<sub>m,z,d</sub> = 0,266 + 0,495 + 0,220 = 0,981 &lt; 1</div>
<div class="t r" style="left:462px;top:801px;font-size:13px;color:#1e1ec4">σ<sub>c,0,d</sub>/(k<sub>c,z</sub><span class="dt">·</span>f<sub>c,0,d</sub>) + k<sub>m</sub><span class="dt">·</span>σ<sub>m,y,d</sub>/f<sub>m,y,d</sub> + σ<sub>m,z,d</sub>/f<sub>m,z,d</sub> = 0,200 + 0,347 + 0,315 = 0,862 &lt; 1</div>
<div class="t r" style="left:418px;top:817px;font-size:13px;color:#111">- потеря устойчивости плоской формы изгиба (поперечное кручение)</div>
<div class="t r" style="left:462px;top:833px;font-size:13px;color:#111">k<sub>crit</sub> = 1,000</div>
<div class="t r" style="left:462px;top:849px;font-size:13px;color:#1e1ec4">σ<sub>c,0,d</sub>/(k<sub>c,y</sub><span class="dt">·</span>f<sub>c,0,d</sub>) + σ<sub>m,y,d</sub>/(k<sub>crit</sub><span class="dt">·</span>f<sub>m,y,d</sub>) + (σ<sub>m,z,d</sub>/f<sub>m,z,d</sub>)² = 0,266 + 0,495 + 0,048 = 0,809 &lt; 1</div>
<div class="t r" style="left:462px;top:865px;font-size:13px;color:#1e1ec4">σ<sub>c,0,d</sub>/(k<sub>c,z</sub><span class="dt">·</span>f<sub>c,0,d</sub>)&nbsp; + (σ<sub>m,y,d</sub>/(k<sub>crit</sub><span class="dt">·</span>f<sub>m,y,d</sub>))² + σ<sub>m,z,d</sub>/f<sub>m,z,d</sub> = 0,200 + 0,245 + 0,315 = 0,760 &lt; 1</div>
<!-- ===== dialog ===== -->
<div class="a" style="left:854px;top:519px;width:553px;height:469px;background:#999"></div>
<div class="a" style="left:859px;top:524px;width:544px;height:459px;background:#fff"></div>
<div class="a" style="left:859px;top:524px;width:544px;height:26px;background:#1175ba"></div>
<svg style="left:859.5px;top:525.3px" width="22" height="22" viewBox="0 0 26 26"><circle cx="12.4" cy="12.6" r="8" fill="#12a612"/><path d="M9 8.2 H15.5 V11.5 H13 V16 H9 Z" fill="#f4fff4"/><rect x="13" y="13" width="4" height="4.6" fill="#d8f8d8"/><rect x="14" y="14" width="2" height="1.5" fill="#3a8a3a"/><text x="14.5" y="9.2" font-size="4.8" font-weight="bold" fill="#c8ffc8" font-family="Liberation Sans">EN</text></svg>
<div class="t" style="left:881.5px;top:532px;font-size:10px;color:#fff">Характеристики материала</div>
<svg style="left:1390px;top:531.5px" width="9" height="9" viewBox="0 0 9 9"><path d="M0.3 0.3 L8.7 8.7 M8.7 0.3 L0.3 8.7" stroke="#fff" stroke-width="1.1"/></svg>
<div class="t" style="left:865px;top:564px;font-size:9.5px;color:#1a1a1a">Древесина цельная мягкая&nbsp; <b style="font-size:9.9px;color:#000">C24</b></div>
<svg style="left:1307px;top:563px" width="16" height="10" viewBox="0 0 16 10"><rect width="16" height="10" fill="#c9a9a9"/><rect x="1" y="0.5" width="14.5" height="6" fill="#d23c3c"/><rect x="1" y="6.5" width="14.5" height="3" fill="#59a65a"/></svg>
<div class="t" style="left:1325px;top:564px;font-size:9.1px;color:#1a1a1a">СТБ EN 338-2011</div>
<div class="a" style="left:863px;top:585px;width:537px;height:1px;background:#a0a0a0"></div>
<div class="a" style="left:1272.5px;top:593px;width:1px;height:260px;background:#cfcfcf"></div>
<div class="a" style="left:1325.5px;top:593px;width:1px;height:260px;background:#cfcfcf"></div>
<div class="a" style="left:1354.5px;top:593px;width:1px;height:260px;background:#cfcfcf"></div>
<div class="a" style="left:1399px;top:593px;width:1px;height:260px;background:#cfcfcf"></div>
<div class="t" style="left:866px;top:599px;font-size:9.7px;color:#1a1a1a">Характеристическое значение прочности древесины при изгибе</div>
<div class="t" style="right:87px;top:598px;font-size:10px;color:#1a1a1a;text-align:right">f<span style="font-size:10px;position:relative;top:2.5px">m,k</span></div>
<div class="t" style="right:57.5px;top:598.5px;font-size:10px;color:#1a1a1a;text-align:right">24</div>
<div class="t" style="left:1358.5px;top:598.5px;font-size:10px;color:#1a1a1a">МПа</div>
<div class="t" style="left:866px;top:619px;font-size:9.7px;color:#1a1a1a">Характеристическое значение прочности при растяжении вдоль волокон</div>
<div class="t" style="right:87px;top:618px;font-size:10px;color:#1a1a1a;text-align:right">f<span style="font-size:10px;position:relative;top:2.5px">t,0,k</span></div>
<div class="t" style="right:57.5px;top:618.5px;font-size:10px;color:#1a1a1a;text-align:right">14</div>
<div class="t" style="left:1358.5px;top:618.5px;font-size:10px;color:#1a1a1a">МПа</div>
<div class="t" style="left:866px;top:639px;font-size:9.7px;color:#1a1a1a">Характеристическое значение прочности при растяжении перпендикулярно волокнам</div>
<div class="t" style="right:87px;top:638px;font-size:10px;color:#1a1a1a;text-align:right">f<span style="font-size:10px;position:relative;top:2.5px">t,90,k</span></div>
<div class="t" style="right:57.5px;top:638.5px;font-size:10px;color:#1a1a1a;text-align:right">0,5</div>
<div class="t" style="left:1358.5px;top:638.5px;font-size:10px;color:#1a1a1a">МПа</div>
<div class="t" style="left:866px;top:659px;font-size:9.7px;color:#1a1a1a">Характеристическое значение прочности при сжатии вдоль волокон</div>
<div class="t" style="right:87px;top:658px;font-size:10px;color:#1a1a1a;text-align:right">f<span style="font-size:10px;position:relative;top:2.5px">c,0,k</span></div>
<div class="t" style="right:57.5px;top:658.5px;font-size:10px;color:#1a1a1a;text-align:right">21</div>
<div class="t" style="left:1358.5px;top:658.5px;font-size:10px;color:#1a1a1a">МПа</div>
<div class="t" style="left:866px;top:679px;font-size:9.7px;color:#1a1a1a">Характеристическое значение прочности при сжатии перпендикулярно волокнам</div>
<div class="t" style="right:87px;top:678px;font-size:10px;color:#1a1a1a;text-align:right">f<span style="font-size:10px;position:relative;top:2.5px">c,90,k</span></div>
<div class="t" style="right:57.5px;top:678.5px;font-size:10px;color:#1a1a1a;text-align:right">2,5</div>
<div class="t" style="left:1358.5px;top:678.5px;font-size:10px;color:#1a1a1a">МПа</div>
<div class="t" style="left:866px;top:699px;font-size:9.7px;color:#1a1a1a">Характеристическое значение прочности при сдвиге</div>
<div class="t" style="right:87px;top:698px;font-size:10px;color:#1a1a1a;text-align:right">f<span style="font-size:10px;position:relative;top:2.5px">v,k</span></div>
<div class="t" style="right:57.5px;top:698.5px;font-size:10px;color:#1a1a1a;text-align:right">2,5</div>
<div class="t" style="left:1358.5px;top:698.5px;font-size:10px;color:#1a1a1a">МПа</div>
<div class="t" style="left:866px;top:719px;font-size:9.7px;color:#1a1a1a">Среднее значение модуля упругости параллельно волокнам</div>
<div class="t" style="right:87px;top:718px;font-size:10px;color:#1a1a1a;text-align:right">E<span style="font-size:10px;position:relative;top:2.5px">0,mean</span></div>
<div class="t" style="right:57.5px;top:718.5px;font-size:10px;color:#1a1a1a;text-align:right">11</div>
<div class="t" style="left:1358.5px;top:718.5px;font-size:10px;color:#1a1a1a">ГПа</div>
<div class="t" style="left:866px;top:739px;font-size:9.7px;color:#1a1a1a">5% ный квантиль модуля упругости параллельно волокнам</div>
<div class="t" style="right:87px;top:738px;font-size:10px;color:#1a1a1a;text-align:right">E<span style="font-size:10px;position:relative;top:2.5px">0,05</span></div>
<div class="t" style="right:57.5px;top:738.5px;font-size:10px;color:#1a1a1a;text-align:right">7,4</div>
<div class="t" style="left:1358.5px;top:738.5px;font-size:10px;color:#1a1a1a">ГПа</div>
<div class="t" style="left:866px;top:759px;font-size:9.7px;color:#1a1a1a">Среднее значение модуля упругости перпендикулярно волокнам</div>
<div class="t" style="right:87px;top:758px;font-size:10px;color:#1a1a1a;text-align:right">E<span style="font-size:10px;position:relative;top:2.5px">90,mean</span></div>
<div class="t" style="right:57.5px;top:758.5px;font-size:10px;color:#1a1a1a;text-align:right">0,37</div>
<div class="t" style="left:1358.5px;top:758.5px;font-size:10px;color:#1a1a1a">ГПа</div>
<div class="t" style="left:866px;top:779px;font-size:9.7px;color:#1a1a1a">Среднее значение модуля сдвига</div>
<div class="t" style="right:87px;top:778px;font-size:10px;color:#1a1a1a;text-align:right">G<span style="font-size:10px;position:relative;top:2.5px">mean</span></div>
<div class="t" style="right:57.5px;top:778.5px;font-size:10px;color:#1a1a1a;text-align:right">0,69</div>
<div class="t" style="left:1358.5px;top:778.5px;font-size:10px;color:#1a1a1a">ГПа</div>
<div class="t" style="left:866px;top:799px;font-size:9.7px;color:#1a1a1a">Характеристическое значение плотности</div>
<div class="t" style="right:87px;top:798px;font-size:10px;color:#1a1a1a;text-align:right">ρ<span style="font-size:10px;position:relative;top:2.5px">k</span></div>
<div class="t" style="right:57.5px;top:798.5px;font-size:10px;color:#1a1a1a;text-align:right">350</div>
<div class="t" style="left:1358.5px;top:798.5px;font-size:10px;color:#1a1a1a">кг/м³</div>
<div class="t" style="left:866px;top:819px;font-size:9.7px;color:#1a1a1a">Среднее значение плотности</div>
<div class="t" style="right:87px;top:818px;font-size:10px;color:#1a1a1a;text-align:right">ρ<span style="font-size:10px;position:relative;top:2.5px">mean</span></div>
<div class="t" style="right:57.5px;top:818.5px;font-size:10px;color:#1a1a1a;text-align:right">420</div>
<div class="t" style="left:1358.5px;top:818.5px;font-size:10px;color:#1a1a1a">кг/м³</div>
<div class="t" style="left:866px;top:839px;font-size:9.7px;color:#1a1a1a">Коэффициент линейного температурного расширения</div>
<div class="t" style="right:87px;top:838px;font-size:10px;color:#1a1a1a;text-align:right">α<span style="font-size:10px;position:relative;top:2.5px">t</span></div>
<div class="t" style="right:57.5px;top:838.5px;font-size:10px;color:#1a1a1a;text-align:right">5,0</div>
<div class="t" style="left:1358.5px;top:838.5px;font-size:10px;color:#1a1a1a">10<span style='position:relative;top:-3px'>-6</span>/°C</div>
<div class="t b" style="left:865px;top:863px;font-size:10px;color:#111">Комментарий</div>
<div class="a" style="left:938px;top:868px;width:462px;height:1px;background:#d0d0d0"></div>
<div class="t" style="left:865px;top:878px;font-size:9.6px;color:#2a2a2a;line-height:11.2px">Указанные значения определены для древесины с влагосодержанием при температуре 20 °С и относительной<br>влажности воздуха 65 %.</div>
<div class="a" style="left:865px;top:877px;width:1px;height:12px;background:#666"></div>
<svg style="left:0;top:0" width="1407" height="990" viewBox="0 0 1407 990">
 <circle cx="1372.7" cy="916.4" r="10.9" fill="#f4f8fc" stroke="#8c8c8c" stroke-width="2.8"/>
 <path d="M1365 912 Q1367 907.5 1372 907" stroke="#b8d4ec" stroke-width="1.6" fill="none"/>
 <path d="M1380.5 925 L1392.5 936.5" stroke="#5e5e5e" stroke-width="4.6"/>
</svg>
<div class="a" style="left:859px;top:950px;width:544px;height:33px;background:#f0f0f0;border-top:1px solid #c8c8c8"></div>
<div class="a" style="left:864px;top:960px;width:20px;height:19px;background:#e1e1e1;border:1px solid #adadad"></div>
<div class="a" style="left:888px;top:960px;width:19px;height:19px;background:#e1e1e1;border:1px solid #adadad"></div>
<svg style="left:0;top:0" width="1407" height="990" viewBox="0 0 1407 990">
 <path d="M875.5 966 L872.5 969.5 L875.5 973" stroke="#000" stroke-width="1.6" fill="none"/>
 <path d="M895.5 966 L898.5 969.5 L895.5 973" stroke="#000" stroke-width="1.6" fill="none"/>
</svg>
<div class="t" style="left:913px;top:965px;font-size:9.4px;color:#8c8c8c">182/206</div>
<div class="a" style="left:1334px;top:960px;width:65px;height:19px;background:#e1e1e1;border:1px solid #adadad"></div>
<div class="t" style="left:1359px;top:965px;font-size:10px;color:#111">OK</div>
</body></html>
